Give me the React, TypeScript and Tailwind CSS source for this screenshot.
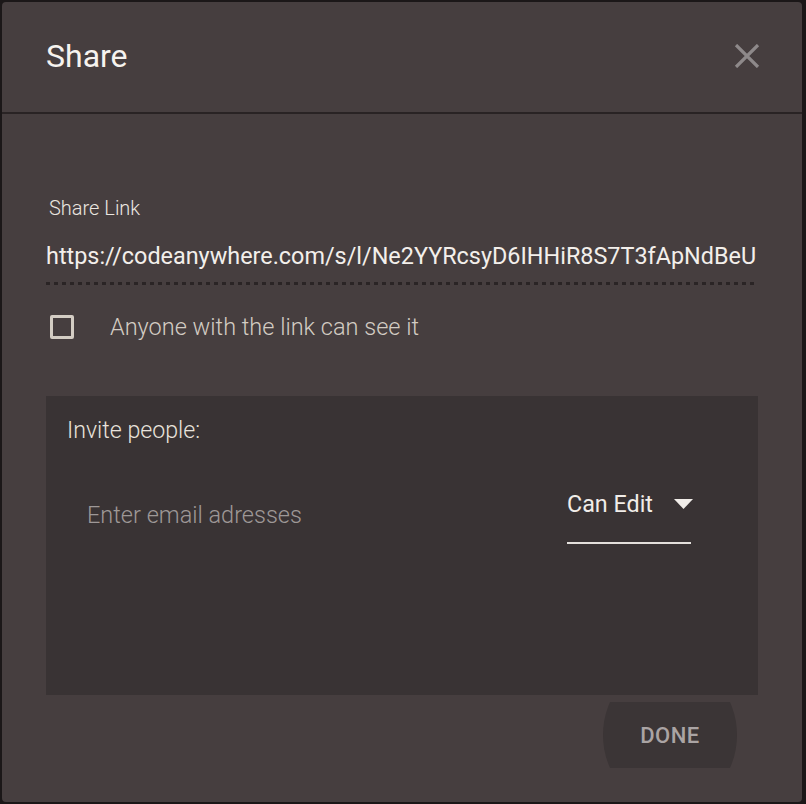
import React from 'react';

const url = 'https://codeanywhere.com/s/l/Ne2YYRcsyD6IHHiR8S7T3fApNdBeU';

function CloseIcon() {
  return (
    <svg width="26" height="24" viewBox="0 0 26 24" fill="none">
      <path d="M2 1 L24 23 M24 1 L2 23" stroke="#8e898a" strokeWidth="3.2" />
    </svg>
  );
}

export default function App() {
  const [checked, setChecked] = React.useState(false);

  return (
    <div className="min-h-screen bg-[#1b1718] pt-[2px] pl-[2px] font-['Roboto',sans-serif]">
      <div className="w-[800px] h-[800px] rounded-[4px] bg-[#463e3f] flex flex-col">
        <header className="h-[112px] shrink-0 border-b-2 border-[#292324] flex items-center justify-between pl-[44px] pr-[42px]">
          <h1 className="text-[32px] leading-[40px] text-[#f6f3ef] -mt-[3px]">Share</h1>
          <button className="-mt-[3px]">
            <CloseIcon />
          </button>
        </header>

        <main className="px-[44px] flex flex-col">
          <label className="mt-[82px] pl-[3px] text-[20px] leading-[24px] font-light text-[#ebe6e0]">Share Link</label>
          <div className="mt-[22px] text-[23.4px] leading-[28px] text-[#f3efeb] whitespace-nowrap">{url}</div>
          <div className="mt-[12px] h-[3px] bg-[linear-gradient(to_right,#2a2425_4px,transparent_4px)] bg-[length:8px_3px]" />

          <div className="mt-[28px] flex items-center gap-[36px] pl-[4px]">
            <button
              onClick={() => setChecked(!checked)}
              className="w-[24px] h-[24px] rounded-[2px] border-[3px] border-[#d4cdc4]"
            />
            <span className="text-[23.5px] leading-[28px] font-light text-[#d3ccc3]">Anyone with the link can see it</span>
          </div>

          <section className="mt-[55px] h-[299px] bg-[#393334] pl-[21px] pr-[67px] pt-[20px]">
            <p className="text-[23.2px] leading-[28px] font-light text-[#e9e3dc]">Invite people:</p>
            <div className="mt-[45px] flex items-start justify-between">
              <input
                placeholder="Enter email adresses"
                className="mt-[11px] ml-[20px] w-[300px] bg-transparent outline-none text-[23.5px] leading-[30px] font-light text-[#f3efeb] placeholder:text-[#9e9897]"
              />
              <div className="w-[124px] border-b-2 border-[#e4e0dc] pb-[23px] flex items-center justify-between">
                <span className="text-[23.3px] leading-[30px] text-[#f1ede9]">Can Edit</span>
                <svg width="19" height="10" viewBox="0 0 19 10" className="mr-[-2px]">
                  <path d="M0 0 H19 L9.5 10 Z" fill="#f1ede9" />
                </svg>
              </div>
            </div>
          </section>

          <div className="flex justify-end pr-[21px] mt-[7px]">
            <div className="w-[134px] h-[66px] overflow-hidden flex items-center justify-center">
              <button className="w-[134px] h-[148px] shrink-0 rounded-[50%] bg-[#3b3536] text-[22px] font-medium tracking-[0.5px] text-[#aaa4a4]">
                DONE
              </button>
            </div>
          </div>
        </main>
      </div>
    </div>
  );
}
